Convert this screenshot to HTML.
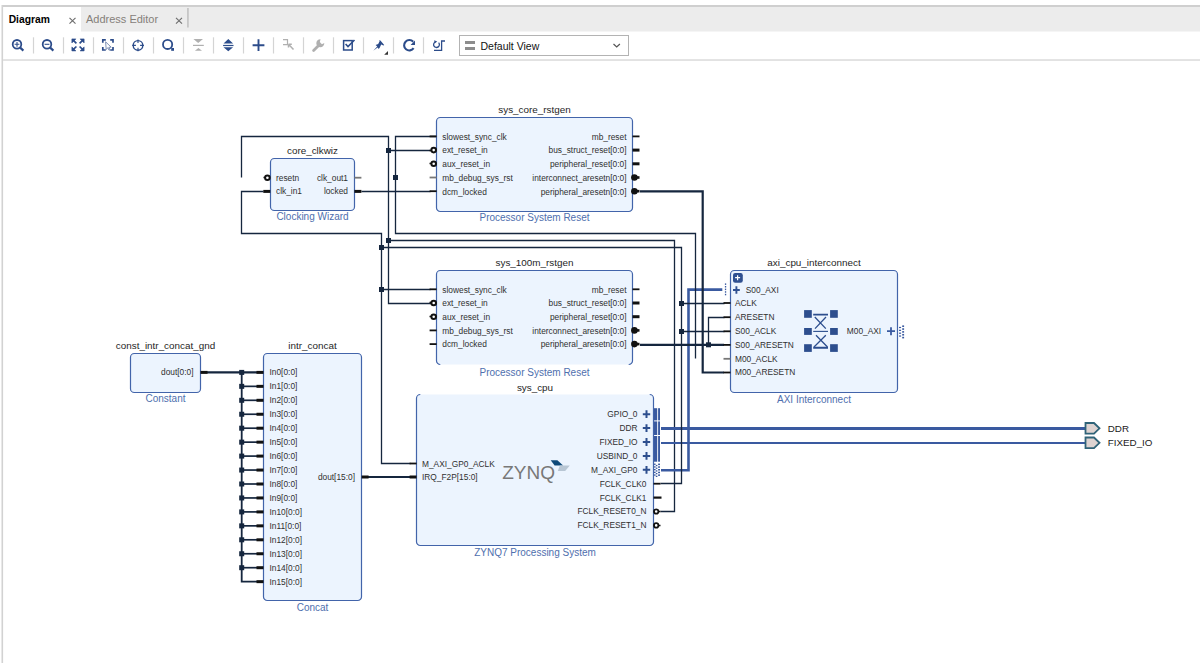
<!DOCTYPE html>
<html><head><meta charset="utf-8"><title>Diagram</title>
<style>html,body{margin:0;padding:0;background:#fff;width:1200px;height:663px;overflow:hidden;}svg{display:block;}</style>
</head><body>
<svg width="1200" height="663" viewBox="0 0 1200 663" font-family='"Liberation Sans", sans-serif'><rect x="0" y="0" width="1200" height="663" fill="#ffffff"/><rect x="2" y="5" width="1198" height="2" fill="#cfcfcf"/><rect x="3" y="7" width="1197" height="24.5" fill="#ececec"/><rect x="3" y="7" width="78" height="25" fill="#ffffff"/><rect x="1.5" y="5" width="1.6" height="658" fill="#d2d2d2"/><text x="8.7" y="23.0" font-size="10.3" text-anchor="start" fill="#000000" font-weight="bold">Diagram</text><text x="86" y="23.1" font-size="11" text-anchor="start" fill="#85807a" >Address Editor</text><path d="M69.5,17.8 L75.5,23.6 M75.5,17.8 L69.5,23.6" stroke="#6e6e6e" stroke-width="1.15"/><path d="M176,17.8 L182,23.6 M182,17.8 L176,23.6" stroke="#6e6e6e" stroke-width="1.15"/><rect x="187.3" y="8" width="1.3" height="19.5" fill="#b8b8b8"/><rect x="3" y="59.1" width="1197" height="1.9" fill="#e2e2e2"/><rect x="32.9" y="37.3" width="1.2" height="16.2" fill="#d4d4d4"/><rect x="62.9" y="37.3" width="1.2" height="16.2" fill="#d4d4d4"/><rect x="92.9" y="37.3" width="1.2" height="16.2" fill="#d4d4d4"/><rect x="122.9" y="37.3" width="1.2" height="16.2" fill="#d4d4d4"/><rect x="152.9" y="37.3" width="1.2" height="16.2" fill="#d4d4d4"/><rect x="182.9" y="37.3" width="1.2" height="16.2" fill="#d4d4d4"/><rect x="212.9" y="37.3" width="1.2" height="16.2" fill="#d4d4d4"/><rect x="242.9" y="37.3" width="1.2" height="16.2" fill="#d4d4d4"/><rect x="272.9" y="37.3" width="1.2" height="16.2" fill="#d4d4d4"/><rect x="302.9" y="37.3" width="1.2" height="16.2" fill="#d4d4d4"/><rect x="332.9" y="37.3" width="1.2" height="16.2" fill="#d4d4d4"/><rect x="362.9" y="37.3" width="1.2" height="16.2" fill="#d4d4d4"/><rect x="392.9" y="37.3" width="1.2" height="16.2" fill="#d4d4d4"/><rect x="422.9" y="37.3" width="1.2" height="16.2" fill="#d4d4d4"/><circle cx="17" cy="44.3" r="4.3" fill="none" stroke="#2c4c8a" stroke-width="1.8"/><path d="M17,41.9 V46.7 M14.6,44.3 H19.4" stroke="#2c4c8a" stroke-width="1.1"/><path d="M20.2,47.6 L23.4,50.6" stroke="#2c4c8a" stroke-width="2.2"/><circle cx="47" cy="44.3" r="4.3" fill="none" stroke="#2c4c8a" stroke-width="1.8"/><path d="M44.6,44.3 H49.4" stroke="#2c4c8a" stroke-width="1.1"/><path d="M50.2,47.6 L53.4,50.6" stroke="#2c4c8a" stroke-width="2.2"/><path d="M71.9,38.9 L75.9,38.9 L71.9,42.9 Z" fill="#2c4c8a" stroke="#2c4c8a" stroke-width="0.6"/><path d="M73.4,40.4 L76.4,43.3" stroke="#2c4c8a" stroke-width="1.7"/><path d="M84.1,38.9 L80.1,38.9 L84.1,42.9 Z" fill="#2c4c8a" stroke="#2c4c8a" stroke-width="0.6"/><path d="M82.6,40.4 L79.6,43.3" stroke="#2c4c8a" stroke-width="1.7"/><path d="M71.9,50.9 L75.9,50.9 L71.9,46.9 Z" fill="#2c4c8a" stroke="#2c4c8a" stroke-width="0.6"/><path d="M73.4,49.4 L76.4,46.5" stroke="#2c4c8a" stroke-width="1.7"/><path d="M84.1,50.9 L80.1,50.9 L84.1,46.9 Z" fill="#2c4c8a" stroke="#2c4c8a" stroke-width="0.6"/><path d="M82.6,49.4 L79.6,46.5" stroke="#2c4c8a" stroke-width="1.7"/><path d="M102.8,42.7 V39.8 H105.8 M110.2,39.8 H113 V42.7 M113,47 V50 H110.2 M105.8,50 H102.8 V47" stroke="#2c4c8a" stroke-width="1.7" fill="none"/><path d="M105.6,41.8 L111.2,47.2 L108.8,47.3 L110,49.8 L109,50.2 L107.8,47.8 L106.2,49.4 Z" fill="#ffffff" stroke="#7084ac" stroke-width="0.9"/><circle cx="138" cy="45.4" r="4.8" fill="none" stroke="#2c4c8a" stroke-width="1.4"/><path d="M132.2,45.4 H135.9 M140.1,45.4 H144 M138,39.6 V43 M138,47.8 V51.2" stroke="#2c4c8a" stroke-width="1.1"/><circle cx="167.6" cy="44.4" r="4.6" fill="none" stroke="#2c4c8a" stroke-width="1.8"/><rect x="171.2" y="48" width="2.8" height="2.8" fill="#2c4c8a"/><path d="M193.4,39 H203 L198.2,42.9 Z M194.9,50.8 H202 L198.45,47.9 Z" fill="#b0b0b0"/><rect x="193" y="44.8" width="10.8" height="1.2" fill="#b0b0b0"/><path d="M223.5,43.5 H233.1 L228.3,39 Z M223.5,47.3 H233.1 L228.3,51.2 Z" fill="#2c4c8a"/><rect x="223.1" y="44.9" width="10.4" height="1.2" fill="#2c4c8a"/><path d="M252.6,45.3 H264.4 M258.5,39.2 V51" stroke="#2c4c8a" stroke-width="1.9"/><path d="M283,39.6 H287.5 V44.6 H283" stroke="#b0b0b0" stroke-width="1.2" fill="none"/><path d="M288.5,44.2 L293.5,49.6 M288.5,44.2 H291.8 M288.5,44.2 V47.5" stroke="#b0b0b0" stroke-width="1.5" fill="none"/><path d="M313.6,50.6 L318.6,45.6" stroke="#b0b0b0" stroke-width="2.8" stroke-linecap="round"/><path d="M320.5,39.2 A4,4 0 1 0 324.3,43 L321.9,44.2 L319.8,42 Z" fill="#b0b0b0"/><rect x="343.6" y="40.6" width="8.6" height="9.4" fill="none" stroke="#2c4c8a" stroke-width="1.5"/><path d="M345.6,44 L348,46.6 L354.5,40" stroke="#2c4c8a" stroke-width="1.6" fill="none"/><path d="M373.3,50.7 L377.2,46.6 L375.6,44.9 L378.2,44 L379.6,41.2 L379.2,40.2 L380.4,40.4 L384.2,45 L383.4,45.6 L381.2,44.6 L379.8,47.6 L378.8,49 L377.6,47.6 Z" fill="#2c4c8a"/><path d="M384.2,54.7 L388,54.7 L388,51 Z" fill="#333"/><path d="M413.2,41.8 A5.2,5.2 0 1 0 413.6,48.2" fill="none" stroke="#2c4c8a" stroke-width="2.1"/><path d="M415,40.6 V45 H410.6 Z" fill="#2c4c8a"/><path d="M438.6,42.6 A2.9,2.9 0 1 1 435.2,42" fill="none" stroke="#2c4c8a" stroke-width="1.3"/><path d="M434.2,40.2 L437.2,41.6 L434.6,43.6 Z" fill="#2c4c8a"/><path d="M434,50.3 H441.6 V41 H445" fill="none" stroke="#2c4c8a" stroke-width="1.3"/><rect x="459.5" y="35.5" width="169" height="20" fill="#fff" stroke="#b3b3b3" stroke-width="1"/><rect x="465" y="41" width="10" height="3" fill="#8d8d8d"/><rect x="465" y="47" width="10" height="3" fill="#8d8d8d"/><text x="480.5" y="50" font-size="10.5" text-anchor="start" fill="#111" >Default View</text><path d="M613.5,44 L616.7,47 L619.9,44" stroke="#555" stroke-width="1.2" fill="none"/><path d="M388.5,240.5 L674.5,240.5 L674.5,511.5 L660.5,511.5" fill="none" stroke="#15263e" stroke-width="1.3" stroke-linecap="butt" stroke-linejoin="miter"/><path d="M661,470.3 L688.5,470.3 L688.5,289.6 L722.3,289.6" fill="none" stroke="#3a5aa0" stroke-width="2.6" stroke-linecap="butt" stroke-linejoin="miter"/><path d="M661,428.5 L1085,428.5" fill="none" stroke="#3a5aa0" stroke-width="3.0" stroke-linecap="butt" stroke-linejoin="miter"/><path d="M661,443 L1085,443" fill="none" stroke="#3a5aa0" stroke-width="2.0" stroke-linecap="butt" stroke-linejoin="miter"/><path d="M241.5,177.5 L241.5,136.5 L388.5,136.5 L388.5,303.5 L433.5,303.5" fill="none" stroke="#15263e" stroke-width="1.3" stroke-linecap="butt" stroke-linejoin="miter"/><path d="M263.5,191.5 L241.5,191.5 L241.5,233.5 L381.5,233.5 L381.5,463.5 L410.5,463.5" fill="none" stroke="#15263e" stroke-width="1.3" stroke-linecap="butt" stroke-linejoin="miter"/><path d="M437.5,136.5 L395.5,136.5 L395.5,233.5 L695.5,233.5 L695.5,358.5" fill="none" stroke="#15263e" stroke-width="1.3" stroke-linecap="butt" stroke-linejoin="miter"/><path d="M361.5,191.5 L430.5,191.5" fill="none" stroke="#15263e" stroke-width="1.3" stroke-linecap="butt" stroke-linejoin="miter"/><path d="M388.5,150.5 L430.5,150.5" fill="none" stroke="#15263e" stroke-width="1.3" stroke-linecap="butt" stroke-linejoin="miter"/><path d="M381.5,247.5 L681.5,247.5 L681.5,483.5 L660.5,483.5" fill="none" stroke="#15263e" stroke-width="1.3" stroke-linecap="butt" stroke-linejoin="miter"/><path d="M381.5,289.5 L430.5,289.5" fill="none" stroke="#15263e" stroke-width="1.3" stroke-linecap="butt" stroke-linejoin="miter"/><path d="M681.5,303.5 L724.5,303.5" fill="none" stroke="#15263e" stroke-width="1.3" stroke-linecap="butt" stroke-linejoin="miter"/><path d="M681.5,331.5 L724.5,331.5" fill="none" stroke="#15263e" stroke-width="1.3" stroke-linecap="butt" stroke-linejoin="miter"/><path d="M724.5,317.5 L708.5,317.5 L708.5,344.5" fill="none" stroke="#15263e" stroke-width="1.3" stroke-linecap="butt" stroke-linejoin="miter"/><path d="M640,191.4 L702.7,191.4 L702.7,372.5 L724,372.5" fill="none" stroke="#15263e" stroke-width="2.2" stroke-linecap="butt" stroke-linejoin="miter"/><path d="M640,344.8 L724,344.8" fill="none" stroke="#15263e" stroke-width="2.2" stroke-linecap="butt" stroke-linejoin="miter"/><path d="M207,372.4 L257,372.4" fill="none" stroke="#15263e" stroke-width="2.2" stroke-linecap="butt" stroke-linejoin="miter"/><path d="M241.7,372.4 L241.7,581.65 L257,581.65" fill="none" stroke="#15263e" stroke-width="1.8" stroke-linecap="butt" stroke-linejoin="miter"/><path d="M241.7,386.34999999999997 L257,386.34999999999997" fill="none" stroke="#15263e" stroke-width="1.7" stroke-linecap="butt" stroke-linejoin="miter"/><path d="M241.7,400.29999999999995 L257,400.29999999999995" fill="none" stroke="#15263e" stroke-width="1.7" stroke-linecap="butt" stroke-linejoin="miter"/><path d="M241.7,414.25 L257,414.25" fill="none" stroke="#15263e" stroke-width="1.7" stroke-linecap="butt" stroke-linejoin="miter"/><path d="M241.7,428.2 L257,428.2" fill="none" stroke="#15263e" stroke-width="1.7" stroke-linecap="butt" stroke-linejoin="miter"/><path d="M241.7,442.15 L257,442.15" fill="none" stroke="#15263e" stroke-width="1.7" stroke-linecap="butt" stroke-linejoin="miter"/><path d="M241.7,456.09999999999997 L257,456.09999999999997" fill="none" stroke="#15263e" stroke-width="1.7" stroke-linecap="butt" stroke-linejoin="miter"/><path d="M241.7,470.04999999999995 L257,470.04999999999995" fill="none" stroke="#15263e" stroke-width="1.7" stroke-linecap="butt" stroke-linejoin="miter"/><path d="M241.7,484.0 L257,484.0" fill="none" stroke="#15263e" stroke-width="1.7" stroke-linecap="butt" stroke-linejoin="miter"/><path d="M241.7,497.95 L257,497.95" fill="none" stroke="#15263e" stroke-width="1.7" stroke-linecap="butt" stroke-linejoin="miter"/><path d="M241.7,511.9 L257,511.9" fill="none" stroke="#15263e" stroke-width="1.7" stroke-linecap="butt" stroke-linejoin="miter"/><path d="M241.7,525.8499999999999 L257,525.8499999999999" fill="none" stroke="#15263e" stroke-width="1.7" stroke-linecap="butt" stroke-linejoin="miter"/><path d="M241.7,539.8 L257,539.8" fill="none" stroke="#15263e" stroke-width="1.7" stroke-linecap="butt" stroke-linejoin="miter"/><path d="M241.7,553.75 L257,553.75" fill="none" stroke="#15263e" stroke-width="1.7" stroke-linecap="butt" stroke-linejoin="miter"/><path d="M241.7,567.6999999999999 L257,567.6999999999999" fill="none" stroke="#15263e" stroke-width="1.7" stroke-linecap="butt" stroke-linejoin="miter"/><path d="M368,477 L410,477" fill="none" stroke="#15263e" stroke-width="2.2" stroke-linecap="butt" stroke-linejoin="miter"/><rect x="386.00" y="148.00" width="5.0" height="5.0" fill="#15263e"/><rect x="393.00" y="175.00" width="5.0" height="5.0" fill="#15263e"/><rect x="386.00" y="238.00" width="5.0" height="5.0" fill="#15263e"/><rect x="379.00" y="245.00" width="5.0" height="5.0" fill="#15263e"/><rect x="379.00" y="287.00" width="5.0" height="5.0" fill="#15263e"/><rect x="679.00" y="301.00" width="5.0" height="5.0" fill="#15263e"/><rect x="679.00" y="329.00" width="5.0" height="5.0" fill="#15263e"/><rect x="706.00" y="342.30" width="5.0" height="5.0" fill="#15263e"/><rect x="239.20" y="369.90" width="5.0" height="5.0" fill="#15263e"/><rect x="239.20" y="383.85" width="5.0" height="5.0" fill="#15263e"/><rect x="239.20" y="397.80" width="5.0" height="5.0" fill="#15263e"/><rect x="239.20" y="411.75" width="5.0" height="5.0" fill="#15263e"/><rect x="239.20" y="425.70" width="5.0" height="5.0" fill="#15263e"/><rect x="239.20" y="439.65" width="5.0" height="5.0" fill="#15263e"/><rect x="239.20" y="453.60" width="5.0" height="5.0" fill="#15263e"/><rect x="239.20" y="467.55" width="5.0" height="5.0" fill="#15263e"/><rect x="239.20" y="481.50" width="5.0" height="5.0" fill="#15263e"/><rect x="239.20" y="495.45" width="5.0" height="5.0" fill="#15263e"/><rect x="239.20" y="509.40" width="5.0" height="5.0" fill="#15263e"/><rect x="239.20" y="523.35" width="5.0" height="5.0" fill="#15263e"/><rect x="239.20" y="537.30" width="5.0" height="5.0" fill="#15263e"/><rect x="239.20" y="551.25" width="5.0" height="5.0" fill="#15263e"/><rect x="239.20" y="565.20" width="5.0" height="5.0" fill="#15263e"/><rect x="270.5" y="158.5" width="84.0" height="52.0" rx="3.8" ry="3.8" fill="#ecf4fe"/><path d="M274.3,158.5 H350.7 A3.8,3.8 0 0 1 354.5,162.3 V206.7 A3.8,3.8 0 0 1 350.7,210.5 H274.3 A3.8,3.8 0 0 1 270.5,206.7 V162.3 A3.8,3.8 0 0 1 274.3,158.5" fill="none" stroke="#4264aa" stroke-width="1.2"/><text x="312.5" y="154.10000000000002" font-size="9.9" text-anchor="middle" fill="#1e1e1e" >core_clkwiz</text><text x="312.5" y="220.3" font-size="10" text-anchor="middle" fill="#4f6fae" >Clocking Wizard</text><path d="M263.5,177.5 L265.5,177.5" fill="none" stroke="#111111" stroke-width="1.5" stroke-linecap="butt" stroke-linejoin="miter"/><circle cx="267.40000000000003" cy="177.7" r="2.3" fill="#fff" stroke="#111111" stroke-width="2"/><path d="M263.3,191.4 L270.3,191.4" fill="none" stroke="#111111" stroke-width="3.0" stroke-linecap="butt" stroke-linejoin="miter"/><text x="276" y="180.6" font-size="8.35" text-anchor="start" fill="#303030" >resetn</text><text x="276" y="194.3" font-size="8.35" text-anchor="start" fill="#303030" >clk_in1</text><text x="348" y="180.6" font-size="8.35" text-anchor="end" fill="#303030" >clk_out1</text><text x="348" y="194.3" font-size="8.35" text-anchor="end" fill="#303030" >locked</text><path d="M354.4,177.7 L361.4,177.7" fill="none" stroke="#777777" stroke-width="1.8" stroke-linecap="butt" stroke-linejoin="miter"/><path d="M354.4,191.4 L361.4,191.4" fill="none" stroke="#111111" stroke-width="3.0" stroke-linecap="butt" stroke-linejoin="miter"/><rect x="436.5" y="117.5" width="196.0" height="94.0" rx="3.8" ry="3.8" fill="#ecf4fe"/><path d="M440.3,117.5 H628.7 A3.8,3.8 0 0 1 632.5,121.3 V207.7 A3.8,3.8 0 0 1 628.7,211.5 H440.3 A3.8,3.8 0 0 1 436.5,207.7 V121.3 A3.8,3.8 0 0 1 440.3,117.5" fill="none" stroke="#4264aa" stroke-width="1.2"/><text x="534.5" y="112.8" font-size="9.9" text-anchor="middle" fill="#1e1e1e" >sys_core_rstgen</text><text x="534.5" y="221.3" font-size="10" text-anchor="middle" fill="#4f6fae" >Processor System Reset</text><path d="M429.6,136.4 L436.6,136.4" fill="none" stroke="#111111" stroke-width="1.8" stroke-linecap="butt" stroke-linejoin="miter"/><path d="M632.5,136.4 L639.5,136.4" fill="none" stroke="#111111" stroke-width="1.8" stroke-linecap="butt" stroke-linejoin="miter"/><text x="442.3" y="139.70000000000002" font-size="8.35" text-anchor="start" fill="#303030" >slowest_sync_clk</text><text x="626.5" y="139.70000000000002" font-size="8.35" text-anchor="end" fill="#303030" >mb_reset</text><path d="M429.5,150.5 L431.5,150.5" fill="none" stroke="#111111" stroke-width="1.5" stroke-linecap="butt" stroke-linejoin="miter"/><circle cx="433.70000000000005" cy="150.1" r="2.3" fill="#fff" stroke="#111111" stroke-width="2"/><path d="M632.5,150.1 L639.5,150.1" fill="none" stroke="#111111" stroke-width="3.0" stroke-linecap="butt" stroke-linejoin="miter"/><text x="442.3" y="153.4" font-size="8.35" text-anchor="start" fill="#303030" >ext_reset_in</text><text x="626.5" y="153.4" font-size="8.35" text-anchor="end" fill="#303030" >bus_struct_reset[0:0]</text><path d="M429.5,163.5 L431.5,163.5" fill="none" stroke="#111111" stroke-width="1.5" stroke-linecap="butt" stroke-linejoin="miter"/><circle cx="433.70000000000005" cy="163.8" r="2.3" fill="#fff" stroke="#111111" stroke-width="2"/><path d="M632.5,163.8 L639.5,163.8" fill="none" stroke="#111111" stroke-width="3.0" stroke-linecap="butt" stroke-linejoin="miter"/><text x="442.3" y="167.10000000000002" font-size="8.35" text-anchor="start" fill="#303030" >aux_reset_in</text><text x="626.5" y="167.10000000000002" font-size="8.35" text-anchor="end" fill="#303030" >peripheral_reset[0:0]</text><path d="M429.6,177.5 L436.6,177.5" fill="none" stroke="#777777" stroke-width="1.8" stroke-linecap="butt" stroke-linejoin="miter"/><path d="M632.5,177.5 L639.5,177.5" fill="none" stroke="#111111" stroke-width="2.6" stroke-linecap="butt" stroke-linejoin="miter"/><circle cx="634.4" cy="177.5" r="3.3" fill="#111111"/><text x="442.3" y="180.8" font-size="8.35" text-anchor="start" fill="#303030" >mb_debug_sys_rst</text><text x="626.5" y="180.8" font-size="8.35" text-anchor="end" fill="#303030" >interconnect_aresetn[0:0]</text><path d="M429.6,191.2 L436.6,191.2" fill="none" stroke="#111111" stroke-width="1.8" stroke-linecap="butt" stroke-linejoin="miter"/><path d="M632.5,191.2 L639.5,191.2" fill="none" stroke="#111111" stroke-width="2.6" stroke-linecap="butt" stroke-linejoin="miter"/><circle cx="634.4" cy="191.2" r="3.3" fill="#111111"/><text x="442.3" y="194.5" font-size="8.35" text-anchor="start" fill="#303030" >dcm_locked</text><text x="626.5" y="194.5" font-size="8.35" text-anchor="end" fill="#303030" >peripheral_aresetn[0:0]</text><rect x="436.5" y="270.5" width="196.0" height="94.0" rx="3.8" ry="3.8" fill="#ecf4fe"/><path d="M440.3,270.5 H628.7 A3.8,3.8 0 0 1 632.5,274.3 V360.7 A3.8,3.8 0 0 1 628.7,364.5 M440.3,364.5 A3.8,3.8 0 0 1 436.5,360.7 V274.3 A3.8,3.8 0 0 1 440.3,270.5" fill="none" stroke="#4264aa" stroke-width="1.2"/><text x="534.5" y="265.8" font-size="9.9" text-anchor="middle" fill="#1e1e1e" >sys_100m_rstgen</text><text x="534.5" y="375.5" font-size="10" text-anchor="middle" fill="#4f6fae" >Processor System Reset</text><path d="M429.6,289.29999999999995 L436.6,289.29999999999995" fill="none" stroke="#111111" stroke-width="1.8" stroke-linecap="butt" stroke-linejoin="miter"/><path d="M632.5,289.29999999999995 L639.5,289.29999999999995" fill="none" stroke="#111111" stroke-width="1.8" stroke-linecap="butt" stroke-linejoin="miter"/><text x="442.3" y="292.59999999999997" font-size="8.35" text-anchor="start" fill="#303030" >slowest_sync_clk</text><text x="626.5" y="292.59999999999997" font-size="8.35" text-anchor="end" fill="#303030" >mb_reset</text><path d="M429.5,302.5 L431.5,302.5" fill="none" stroke="#111111" stroke-width="1.5" stroke-linecap="butt" stroke-linejoin="miter"/><circle cx="433.70000000000005" cy="302.99999999999994" r="2.3" fill="#fff" stroke="#111111" stroke-width="2"/><path d="M632.5,302.99999999999994 L639.5,302.99999999999994" fill="none" stroke="#111111" stroke-width="3.0" stroke-linecap="butt" stroke-linejoin="miter"/><text x="442.3" y="306.29999999999995" font-size="8.35" text-anchor="start" fill="#303030" >ext_reset_in</text><text x="626.5" y="306.29999999999995" font-size="8.35" text-anchor="end" fill="#303030" >bus_struct_reset[0:0]</text><path d="M429.5,316.5 L431.5,316.5" fill="none" stroke="#111111" stroke-width="1.5" stroke-linecap="butt" stroke-linejoin="miter"/><circle cx="433.70000000000005" cy="316.69999999999993" r="2.3" fill="#fff" stroke="#111111" stroke-width="2"/><path d="M632.5,316.69999999999993 L639.5,316.69999999999993" fill="none" stroke="#111111" stroke-width="3.0" stroke-linecap="butt" stroke-linejoin="miter"/><text x="442.3" y="319.99999999999994" font-size="8.35" text-anchor="start" fill="#303030" >aux_reset_in</text><text x="626.5" y="319.99999999999994" font-size="8.35" text-anchor="end" fill="#303030" >peripheral_reset[0:0]</text><path d="M429.6,330.4 L436.6,330.4" fill="none" stroke="#111111" stroke-width="1.8" stroke-linecap="butt" stroke-linejoin="miter"/><path d="M632.5,330.4 L639.5,330.4" fill="none" stroke="#111111" stroke-width="2.6" stroke-linecap="butt" stroke-linejoin="miter"/><circle cx="634.4" cy="330.4" r="3.3" fill="#111111"/><text x="442.3" y="333.7" font-size="8.35" text-anchor="start" fill="#303030" >mb_debug_sys_rst</text><text x="626.5" y="333.7" font-size="8.35" text-anchor="end" fill="#303030" >interconnect_aresetn[0:0]</text><path d="M429.6,344.09999999999997 L436.6,344.09999999999997" fill="none" stroke="#111111" stroke-width="1.8" stroke-linecap="butt" stroke-linejoin="miter"/><path d="M632.5,344.09999999999997 L639.5,344.09999999999997" fill="none" stroke="#111111" stroke-width="2.6" stroke-linecap="butt" stroke-linejoin="miter"/><circle cx="634.4" cy="344.09999999999997" r="3.3" fill="#111111"/><text x="442.3" y="347.4" font-size="8.35" text-anchor="start" fill="#303030" >dcm_locked</text><text x="626.5" y="347.4" font-size="8.35" text-anchor="end" fill="#303030" >peripheral_aresetn[0:0]</text><rect x="130.5" y="353.5" width="70.0" height="39.0" rx="3.8" ry="3.8" fill="#ecf4fe"/><path d="M134.3,353.5 H196.7 A3.8,3.8 0 0 1 200.5,357.3 V388.7 A3.8,3.8 0 0 1 196.7,392.5 H134.3 A3.8,3.8 0 0 1 130.5,388.7 V357.3 A3.8,3.8 0 0 1 134.3,353.5" fill="none" stroke="#4264aa" stroke-width="1.2"/><text x="165.5" y="348.8" font-size="9.9" text-anchor="middle" fill="#1e1e1e" >const_intr_concat_gnd</text><text x="165.5" y="402.3" font-size="10" text-anchor="middle" fill="#4f6fae" >Constant</text><text x="193.5" y="375.3" font-size="8.35" text-anchor="end" fill="#303030" >dout[0:0]</text><path d="M200.5,372.4 L207.5,372.4" fill="none" stroke="#111111" stroke-width="3.0" stroke-linecap="butt" stroke-linejoin="miter"/><rect x="263.5" y="353.5" width="98.0" height="247.0" rx="3.8" ry="3.8" fill="#ecf4fe"/><path d="M267.3,353.5 H357.7 A3.8,3.8 0 0 1 361.5,357.3 V596.7 A3.8,3.8 0 0 1 357.7,600.5 H267.3 A3.8,3.8 0 0 1 263.5,596.7 V357.3 A3.8,3.8 0 0 1 267.3,353.5" fill="none" stroke="#4264aa" stroke-width="1.2"/><text x="312.5" y="348.8" font-size="9.9" text-anchor="middle" fill="#1e1e1e" >intr_concat</text><text x="312.5" y="611.0999999999999" font-size="10" text-anchor="middle" fill="#4f6fae" >Concat</text><path d="M256.5,372.4 L263.5,372.4" fill="none" stroke="#111111" stroke-width="3.0" stroke-linecap="butt" stroke-linejoin="miter"/><text x="269.5" y="375.29999999999995" font-size="8.35" text-anchor="start" fill="#303030" >In0[0:0]</text><path d="M256.5,386.34999999999997 L263.5,386.34999999999997" fill="none" stroke="#111111" stroke-width="3.0" stroke-linecap="butt" stroke-linejoin="miter"/><text x="269.5" y="389.24999999999994" font-size="8.35" text-anchor="start" fill="#303030" >In1[0:0]</text><path d="M256.5,400.29999999999995 L263.5,400.29999999999995" fill="none" stroke="#111111" stroke-width="3.0" stroke-linecap="butt" stroke-linejoin="miter"/><text x="269.5" y="403.19999999999993" font-size="8.35" text-anchor="start" fill="#303030" >In2[0:0]</text><path d="M256.5,414.25 L263.5,414.25" fill="none" stroke="#111111" stroke-width="3.0" stroke-linecap="butt" stroke-linejoin="miter"/><text x="269.5" y="417.15" font-size="8.35" text-anchor="start" fill="#303030" >In3[0:0]</text><path d="M256.5,428.2 L263.5,428.2" fill="none" stroke="#111111" stroke-width="3.0" stroke-linecap="butt" stroke-linejoin="miter"/><text x="269.5" y="431.09999999999997" font-size="8.35" text-anchor="start" fill="#303030" >In4[0:0]</text><path d="M256.5,442.15 L263.5,442.15" fill="none" stroke="#111111" stroke-width="3.0" stroke-linecap="butt" stroke-linejoin="miter"/><text x="269.5" y="445.04999999999995" font-size="8.35" text-anchor="start" fill="#303030" >In5[0:0]</text><path d="M256.5,456.09999999999997 L263.5,456.09999999999997" fill="none" stroke="#111111" stroke-width="3.0" stroke-linecap="butt" stroke-linejoin="miter"/><text x="269.5" y="458.99999999999994" font-size="8.35" text-anchor="start" fill="#303030" >In6[0:0]</text><path d="M256.5,470.04999999999995 L263.5,470.04999999999995" fill="none" stroke="#111111" stroke-width="3.0" stroke-linecap="butt" stroke-linejoin="miter"/><text x="269.5" y="472.94999999999993" font-size="8.35" text-anchor="start" fill="#303030" >In7[0:0]</text><path d="M256.5,484.0 L263.5,484.0" fill="none" stroke="#111111" stroke-width="3.0" stroke-linecap="butt" stroke-linejoin="miter"/><text x="269.5" y="486.9" font-size="8.35" text-anchor="start" fill="#303030" >In8[0:0]</text><path d="M256.5,497.95 L263.5,497.95" fill="none" stroke="#111111" stroke-width="3.0" stroke-linecap="butt" stroke-linejoin="miter"/><text x="269.5" y="500.84999999999997" font-size="8.35" text-anchor="start" fill="#303030" >In9[0:0]</text><path d="M256.5,511.9 L263.5,511.9" fill="none" stroke="#111111" stroke-width="3.0" stroke-linecap="butt" stroke-linejoin="miter"/><text x="269.5" y="514.8" font-size="8.35" text-anchor="start" fill="#303030" >In10[0:0]</text><path d="M256.5,525.8499999999999 L263.5,525.8499999999999" fill="none" stroke="#111111" stroke-width="3.0" stroke-linecap="butt" stroke-linejoin="miter"/><text x="269.5" y="528.7499999999999" font-size="8.35" text-anchor="start" fill="#303030" >In11[0:0]</text><path d="M256.5,539.8 L263.5,539.8" fill="none" stroke="#111111" stroke-width="3.0" stroke-linecap="butt" stroke-linejoin="miter"/><text x="269.5" y="542.6999999999999" font-size="8.35" text-anchor="start" fill="#303030" >In12[0:0]</text><path d="M256.5,553.75 L263.5,553.75" fill="none" stroke="#111111" stroke-width="3.0" stroke-linecap="butt" stroke-linejoin="miter"/><text x="269.5" y="556.65" font-size="8.35" text-anchor="start" fill="#303030" >In13[0:0]</text><path d="M256.5,567.6999999999999 L263.5,567.6999999999999" fill="none" stroke="#111111" stroke-width="3.0" stroke-linecap="butt" stroke-linejoin="miter"/><text x="269.5" y="570.5999999999999" font-size="8.35" text-anchor="start" fill="#303030" >In14[0:0]</text><path d="M256.5,581.65 L263.5,581.65" fill="none" stroke="#111111" stroke-width="3.0" stroke-linecap="butt" stroke-linejoin="miter"/><text x="269.5" y="584.55" font-size="8.35" text-anchor="start" fill="#303030" >In15[0:0]</text><text x="355" y="479.7" font-size="8.35" text-anchor="end" fill="#303030" >dout[15:0]</text><path d="M361.6,477 L368.6,477" fill="none" stroke="#111111" stroke-width="3.0" stroke-linecap="butt" stroke-linejoin="miter"/><rect x="416.5" y="394.5" width="237.0" height="151.0" rx="3.8" ry="3.8" fill="#ecf4fe"/><path d="M649.7,394.5 A3.8,3.8 0 0 1 653.5,398.3 V541.7 A3.8,3.8 0 0 1 649.7,545.5 H420.3 A3.8,3.8 0 0 1 416.5,541.7 V398.3 A3.8,3.8 0 0 1 420.3,394.5" fill="none" stroke="#4264aa" stroke-width="1.2"/><text x="535.0" y="390.5" font-size="9.9" text-anchor="middle" fill="#1e1e1e" >sys_cpu</text><text x="535.0" y="555.6999999999999" font-size="10" text-anchor="middle" fill="#4f6fae" >ZYNQ7 Processing System</text><path d="M409.6,463.5 L416.6,463.5" fill="none" stroke="#111111" stroke-width="1.8" stroke-linecap="butt" stroke-linejoin="miter"/><path d="M409.6,477 L416.6,477" fill="none" stroke="#111111" stroke-width="3.0" stroke-linecap="butt" stroke-linejoin="miter"/><text x="422" y="466.5" font-size="8.35" text-anchor="start" fill="#303030" >M_AXI_GP0_ACLK</text><text x="422" y="479.9" font-size="8.35" text-anchor="start" fill="#303030" >IRQ_F2P[15:0]</text><text x="637.5" y="417.09999999999997" font-size="8.35" text-anchor="end" fill="#303030" >GPIO_0</text><path d="M642.8,414.2 H650.2 M646.5,410.3 V418.09999999999997" stroke="#2d4e8e" stroke-width="2"/><text x="637.5" y="430.99999999999994" font-size="8.35" text-anchor="end" fill="#303030" >DDR</text><path d="M642.8,428.09999999999997 H650.2 M646.5,424.2 V431.99999999999994" stroke="#2d4e8e" stroke-width="2"/><text x="637.5" y="444.9" font-size="8.35" text-anchor="end" fill="#303030" >FIXED_IO</text><path d="M642.8,442.0 H650.2 M646.5,438.1 V445.9" stroke="#2d4e8e" stroke-width="2"/><text x="637.5" y="458.79999999999995" font-size="8.35" text-anchor="end" fill="#303030" >USBIND_0</text><path d="M642.8,455.9 H650.2 M646.5,452.0 V459.79999999999995" stroke="#2d4e8e" stroke-width="2"/><text x="637.5" y="472.7" font-size="8.35" text-anchor="end" fill="#303030" >M_AXI_GP0</text><path d="M642.8,469.8 H650.2 M646.5,465.90000000000003 V473.7" stroke="#2d4e8e" stroke-width="2"/><text x="646.5" y="486.59999999999997" font-size="8.35" text-anchor="end" fill="#303030" >FCLK_CLK0</text><text x="646.5" y="500.5" font-size="8.35" text-anchor="end" fill="#303030" >FCLK_CLK1</text><text x="646.5" y="514.4" font-size="8.35" text-anchor="end" fill="#303030" >FCLK_RESET0_N</text><text x="646.5" y="528.3" font-size="8.35" text-anchor="end" fill="#303030" >FCLK_RESET1_N</text><rect x="654" y="408.2" width="3.2" height="12.20" fill="#3a5aa0"/><rect x="658.1" y="408.2" width="1.9" height="12.20" fill="#3a5aa0"/><rect x="654" y="421.4" width="3.2" height="13.60" fill="#3a5aa0"/><rect x="658.1" y="421.4" width="1.9" height="13.60" fill="#3a5aa0"/><rect x="654" y="436.0" width="3.2" height="25.70" fill="#3a5aa0"/><rect x="658.1" y="436.0" width="1.9" height="25.70" fill="#3a5aa0"/><rect x="654" y="463.60" width="1.6" height="1.3" fill="#3a5aa0"/><rect x="655.8" y="464.90" width="1.6" height="1.3" fill="#3a5aa0"/><rect x="658.1" y="463.60" width="1.9" height="1.5" fill="#3a5aa0"/><rect x="654" y="466.30" width="1.6" height="1.3" fill="#3a5aa0"/><rect x="655.8" y="467.60" width="1.6" height="1.3" fill="#3a5aa0"/><rect x="658.1" y="466.30" width="1.9" height="1.5" fill="#3a5aa0"/><rect x="654" y="469.00" width="1.6" height="1.3" fill="#3a5aa0"/><rect x="655.8" y="470.30" width="1.6" height="1.3" fill="#3a5aa0"/><rect x="658.1" y="469.00" width="1.9" height="1.5" fill="#3a5aa0"/><rect x="654" y="471.70" width="1.6" height="1.3" fill="#3a5aa0"/><rect x="655.8" y="473.00" width="1.6" height="1.3" fill="#3a5aa0"/><rect x="658.1" y="471.70" width="1.9" height="1.5" fill="#3a5aa0"/><rect x="654" y="474.40" width="1.6" height="1.3" fill="#3a5aa0"/><rect x="655.8" y="475.70" width="1.6" height="1.3" fill="#3a5aa0"/><rect x="658.1" y="474.40" width="1.9" height="1.5" fill="#3a5aa0"/><path d="M653.5,483.7 L660.5,483.7" fill="none" stroke="#111111" stroke-width="1.8" stroke-linecap="butt" stroke-linejoin="miter"/><path d="M653.5,497.6 L661.5,497.6" fill="none" stroke="#111111" stroke-width="2.2" stroke-linecap="butt" stroke-linejoin="miter"/><path d="M657.5,511.5 L660.5,511.5" fill="none" stroke="#111111" stroke-width="1.5" stroke-linecap="butt" stroke-linejoin="miter"/><circle cx="656.2" cy="511.5" r="2.2" fill="#fff" stroke="#111111" stroke-width="1.8"/><path d="M657.5,525.5 L660.5,525.5" fill="none" stroke="#111111" stroke-width="1.5" stroke-linecap="butt" stroke-linejoin="miter"/><circle cx="656.2" cy="525.4" r="2.2" fill="#fff" stroke="#111111" stroke-width="1.8"/><text x="502.2" y="479.2" font-size="19" text-anchor="start" fill="#787878" >ZYNQ</text><path d="M550.7,460.3 L557.4,460.3 L563.1,465.4 L554.6,465.4 Z" fill="#0f4a7a"/><path d="M559.9,465.4 L569.8,465.4 L565.2,470.9 L557.8,470.9 Z" fill="#b8c6d4"/><rect x="730.5" y="270.5" width="167.0" height="122.0" rx="3.8" ry="3.8" fill="#ecf4fe"/><path d="M734.3,270.5 H893.7 A3.8,3.8 0 0 1 897.5,274.3 V388.7 A3.8,3.8 0 0 1 893.7,392.5 H734.3 A3.8,3.8 0 0 1 730.5,388.7 V274.3 A3.8,3.8 0 0 1 734.3,270.5" fill="none" stroke="#4264aa" stroke-width="1.2"/><text x="814.0" y="266.3" font-size="9.9" text-anchor="middle" fill="#1e1e1e" >axi_cpu_interconnect</text><text x="814.0" y="403.0" font-size="10" text-anchor="middle" fill="#4f6fae" >AXI Interconnect</text><rect x="733" y="273" width="9.8" height="9.8" rx="2.2" fill="#2f5091"/><path d="M737.6,275.2 V280.2 M735.1,277.7 H740.1" stroke="#fff" stroke-width="1.2"/><path d="M733,290 H739.8 M736.4,286.3 V293.7" stroke="#2f5091" stroke-width="1.9"/><text x="745.8" y="292.6" font-size="8.35" text-anchor="start" fill="#303030" >S00_AXI</text><rect x="724.9" y="283.40" width="1.3" height="1.5" fill="#3a5aa0"/><rect x="724.9" y="286.00" width="1.3" height="1.5" fill="#3a5aa0"/><rect x="724.9" y="288.60" width="1.3" height="1.5" fill="#3a5aa0"/><rect x="724.9" y="291.20" width="1.3" height="1.5" fill="#3a5aa0"/><rect x="724.9" y="293.80" width="1.3" height="1.5" fill="#3a5aa0"/><path d="M723.5,303.0 L730.5,303.0" fill="none" stroke="#111111" stroke-width="1.8" stroke-linecap="butt" stroke-linejoin="miter"/><text x="735" y="305.9" font-size="8.35" text-anchor="start" fill="#303030" >ACLK</text><path d="M723.5,317.2 L730.5,317.2" fill="none" stroke="#111111" stroke-width="1.8" stroke-linecap="butt" stroke-linejoin="miter"/><text x="735" y="320.09999999999997" font-size="8.35" text-anchor="start" fill="#303030" >ARESETN</text><path d="M723.5,331.3 L730.5,331.3" fill="none" stroke="#111111" stroke-width="1.8" stroke-linecap="butt" stroke-linejoin="miter"/><text x="735" y="334.2" font-size="8.35" text-anchor="start" fill="#303030" >S00_ACLK</text><path d="M723.5,344.9 L730.5,344.9" fill="none" stroke="#111111" stroke-width="1.8" stroke-linecap="butt" stroke-linejoin="miter"/><text x="735" y="347.79999999999995" font-size="8.35" text-anchor="start" fill="#303030" >S00_ARESETN</text><path d="M723.5,358.8 L730.5,358.8" fill="none" stroke="#777777" stroke-width="1.8" stroke-linecap="butt" stroke-linejoin="miter"/><text x="735" y="361.7" font-size="8.35" text-anchor="start" fill="#303030" >M00_ACLK</text><path d="M723.5,372.5 L730.5,372.5" fill="none" stroke="#111111" stroke-width="1.8" stroke-linecap="butt" stroke-linejoin="miter"/><text x="735" y="375.4" font-size="8.35" text-anchor="start" fill="#303030" >M00_ARESETN</text><rect x="804.1" y="310.1" width="7.7" height="7.7" fill="#2d4e8e"/><rect x="830.1" y="310.1" width="7.7" height="7.7" fill="#2d4e8e"/><rect x="804.1" y="328" width="7.7" height="6.9" fill="#2d4e8e"/><rect x="830.1" y="328" width="7.7" height="6.9" fill="#2d4e8e"/><rect x="804.1" y="344.2" width="7.7" height="7.7" fill="#2d4e8e"/><rect x="830.1" y="344.2" width="7.7" height="7.7" fill="#2d4e8e"/><path d="M813.2,314.6 H828 M813.2,347.8 H828" stroke="#2d4e8e" stroke-width="1.9" fill="none"/><path d="M813.2,331.4 H828" stroke="#2d4e8e" stroke-width="1.1" fill="none"/><path d="M814.8,317 L825.8,328.6 M826,317 L815,328.6 M816,335.2 L827.5,347 M825.8,335.2 L814,347" stroke="#2d4e8e" stroke-width="1.3" fill="none"/><text x="846.8" y="334.1" font-size="8.35" text-anchor="start" fill="#303030" >M00_AXI</text><path d="M887,331.2 H895 M891,327.2 V335.2" stroke="#3a5aa0" stroke-width="1.8"/><rect x="902.2" y="325.40" width="1.9" height="1.6" fill="#3a5aa0"/><rect x="902.2" y="328.25" width="1.9" height="1.6" fill="#3a5aa0"/><rect x="902.2" y="331.10" width="1.9" height="1.6" fill="#3a5aa0"/><rect x="902.2" y="333.95" width="1.9" height="1.6" fill="#3a5aa0"/><rect x="902.2" y="336.80" width="1.9" height="1.6" fill="#3a5aa0"/><rect x="899" y="326.90" width="2.1" height="1.2" fill="#3a5aa0"/><rect x="899" y="329.75" width="2.1" height="1.2" fill="#3a5aa0"/><rect x="899" y="332.60" width="2.1" height="1.2" fill="#3a5aa0"/><rect x="899" y="335.45" width="2.1" height="1.2" fill="#3a5aa0"/><path d="M1085.5,423.0 H1094 L1099.5,428.3 L1094,433.6 H1085.5 Z" fill="#ddd3d1" stroke="#2f6378" stroke-width="1.8"/><text x="1107.8" y="431.8" font-size="9.8" text-anchor="start" fill="#1a1a1a" >DDR</text><path d="M1085.5,437.5 H1094 L1099.5,442.8 L1094,448.1 H1085.5 Z" fill="#ddd3d1" stroke="#2f6378" stroke-width="1.8"/><text x="1107.8" y="446.3" font-size="9.8" text-anchor="start" fill="#1a1a1a" >FIXED_IO</text></svg>
</body></html>
